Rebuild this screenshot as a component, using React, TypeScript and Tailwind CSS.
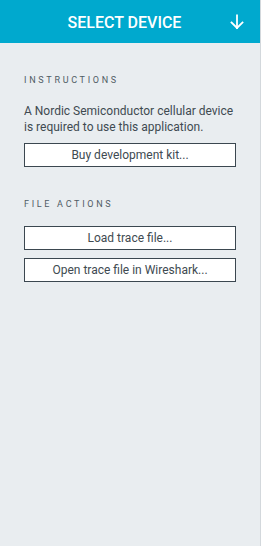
import React from "react";

export default function App() {
  return (
    <div className="w-[261px] h-[546px] flex flex-col bg-[#e9edf0] border-r border-[#d3d8dc]" style={{ fontFamily: "Roboto, 'Liberation Sans', sans-serif" }}>
      <div className="h-[43px] shrink-0 bg-[#00a9ce] flex items-center text-white">
        <div className="flex-1 text-center pl-[20px] pt-[2px] text-[16px] font-medium">SELECT DEVICE</div>
        <svg width="16" height="16" viewBox="0 0 16 16" className="mr-[15px]" fill="none" stroke="white" strokeWidth="1.8" strokeLinecap="square">
          <path d="M8 1.5 V14" />
          <path d="M2.5 8.5 L8 14 L13.5 8.5" />
        </svg>
      </div>
      <div className="px-[24px] pt-[31px] flex flex-col">
        <div className="text-[9px] tracking-[0.3em] text-[#505c65] leading-[12px]">INSTRUCTIONS</div>
        <p className="mt-[17px] text-[12px] leading-[16px] text-[#404a51]">
          A Nordic Semiconductor cellular device is required to use this application.
        </p>
        <button className="mt-[8px] h-[24px] w-[212px] border border-[#3b4750] bg-white text-[12px] text-[#404a51]">Buy development kit...</button>
        <div className="mt-[31px] text-[9px] tracking-[0.3em] text-[#505c65] leading-[12px]">FILE ACTIONS</div>
        <button className="mt-[16px] h-[24px] w-[212px] border border-[#3b4750] bg-white text-[12px] text-[#404a51]">Load trace file...</button>
        <button className="mt-[8px] h-[24px] w-[212px] border border-[#3b4750] bg-white text-[12px] text-[#404a51]">Open trace file in Wireshark...</button>
      </div>
    </div>
  );
}
